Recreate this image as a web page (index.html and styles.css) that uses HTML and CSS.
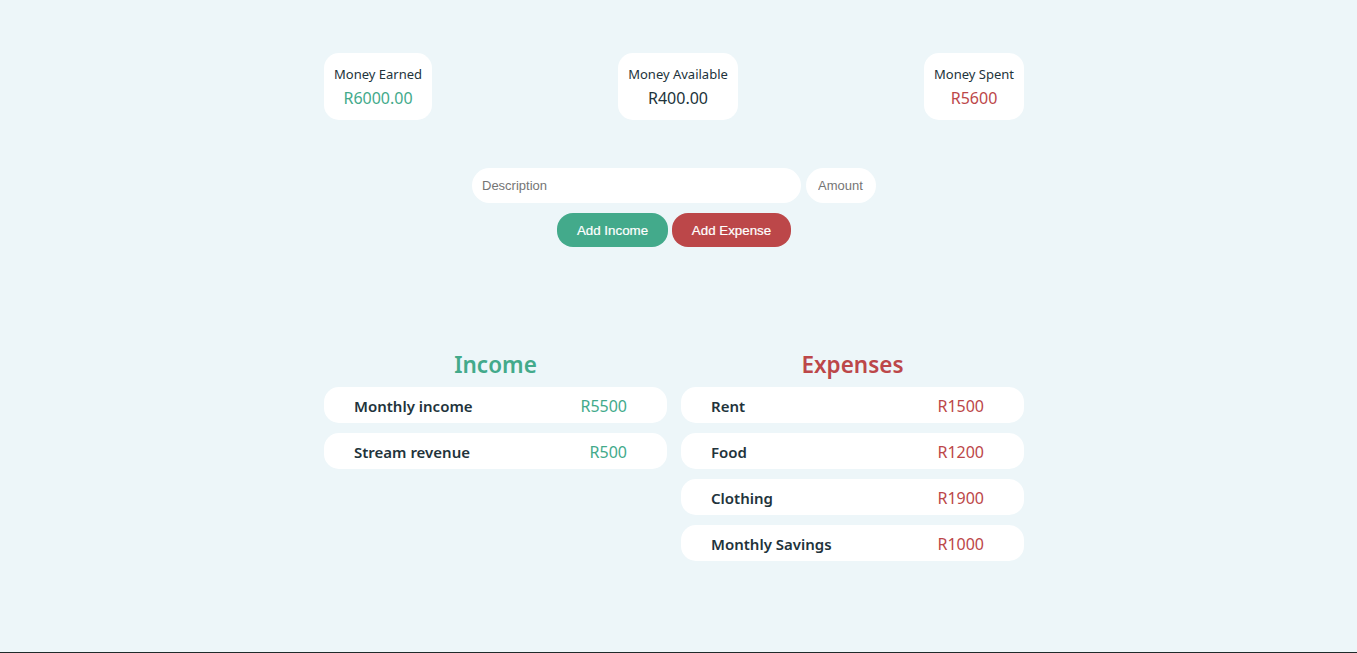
FILE: index.html
```html
<!DOCTYPE html>
<html>
<head>
<meta charset="utf-8">
<link rel="stylesheet" href="styles.css">
</head>
<body>
<main class="app">
  <section class="summary">
    <div class="stat">
      <div class="stat-label">Money Earned</div>
      <div class="stat-value income">R6000.00</div>
    </div>
    <div class="stat">
      <div class="stat-label">Money Available</div>
      <div class="stat-value">R400.00</div>
    </div>
    <div class="stat">
      <div class="stat-label">Money Spent</div>
      <div class="stat-value expense">R5600</div>
    </div>
  </section>

  <section class="form">
    <div class="inputs">
      <input class="field desc" type="text" placeholder="Description">
      <input class="field amount" type="text" placeholder="Amount">
    </div>
    <div class="buttons">
      <button class="btn btn-income">Add Income</button>
      <button class="btn btn-expense">Add Expense</button>
    </div>
  </section>

  <section class="lists">
    <div class="col">
      <h2 class="col-title income">Income</h2>
      <div class="item"><span class="name">Monthly income</span><span class="amt income">R5500</span></div>
      <div class="item"><span class="name">Stream revenue</span><span class="amt income">R500</span></div>
    </div>
    <div class="col">
      <h2 class="col-title expense">Expenses</h2>
      <div class="item"><span class="name">Rent</span><span class="amt expense">R1500</span></div>
      <div class="item"><span class="name">Food</span><span class="amt expense">R1200</span></div>
      <div class="item"><span class="name">Clothing</span><span class="amt expense">R1900</span></div>
      <div class="item"><span class="name">Monthly Savings</span><span class="amt expense">R1000</span></div>
    </div>
  </section>
</main>
<div class="bottom-bar"></div>
</body>
</html>
```
FILE: styles.css
```css
html, body {
  margin: 0;
  height: 100%;
}
body {
  background: #edf6f9;
  font-family: "Noto Sans", "Lato", sans-serif;
  color: #22333b;
  padding-right: 9px;
  box-sizing: border-box;
  position: relative;
  overflow: hidden;
}
.app {
  width: 700px;
  margin: 0 auto;
  padding-top: 53px;
}
.summary {
  display: flex;
  justify-content: space-between;
  align-items: flex-start;
}
.stat {
  background: #fff;
  border-radius: 15px;
  height: 67px;
  box-sizing: border-box;
  padding: 12px 10px 0;
  text-align: center;
}
.stat-label {
  font-size: 13px;
  line-height: 18px;
}
.stat-value {
  font-size: 16px;
  line-height: 22px;
  margin-top: 4px;
}
.income { color: #43aa8b; }
.expense { color: #bc4749; }

.form {
  margin-top: 48px;
  display: flex;
  flex-direction: column;
  align-items: center;
  gap: 10px;
}
.inputs {
  display: flex;
  gap: 5px;
}
.field {
  border: none;
  outline: none;
  background: #fff;
  border-radius: 18px;
  height: 35px;
  box-sizing: border-box;
  padding: 0 10px;
  font-family: "Liberation Sans", Arial, sans-serif;
  font-size: 13px;
  color: #333;
}
.field::placeholder { color: #757575; }
.desc { width: 329px; }
.amount { width: 70px; padding: 0 12px; }
.buttons {
  display: flex;
  gap: 4px;
}
.btn {
  border: none;
  border-radius: 16px;
  height: 34px;
  padding: 0;
  white-space: nowrap;
  color: #fff;
  font-family: "Liberation Sans", Arial, sans-serif;
  font-size: 13.33px;
  -webkit-text-stroke: 0.2px #fff;
}
.btn-income { background: #43aa8b; width: 111px; }
.btn-expense { background: #bc4749; width: 119px; }

.lists {
  margin-top: 101px;
  display: flex;
  gap: 14px;
  align-items: flex-start;
}
.col {
  flex: 1;
  display: flex;
  flex-direction: column;
  gap: 10px;
}
.col-title {
  margin: 0 0 -5px;
  text-align: center;
  font-size: 22.5px;
  line-height: 34px;
  font-weight: 600;
}
.item {
  background: #fff;
  border-radius: 15px;
  height: 36px;
  box-sizing: border-box;
  padding: 2px 40px 0 30px;
  display: flex;
  align-items: center;
  justify-content: space-between;
}
.name {
  font-weight: 600;
  font-size: 15px;
}
.amt {
  font-size: 16px;
}
.bottom-bar {
  position: absolute;
  left: 0;
  right: 0;
  bottom: 0;
  height: 1px;
  background: #1f2a2a;
}
```
